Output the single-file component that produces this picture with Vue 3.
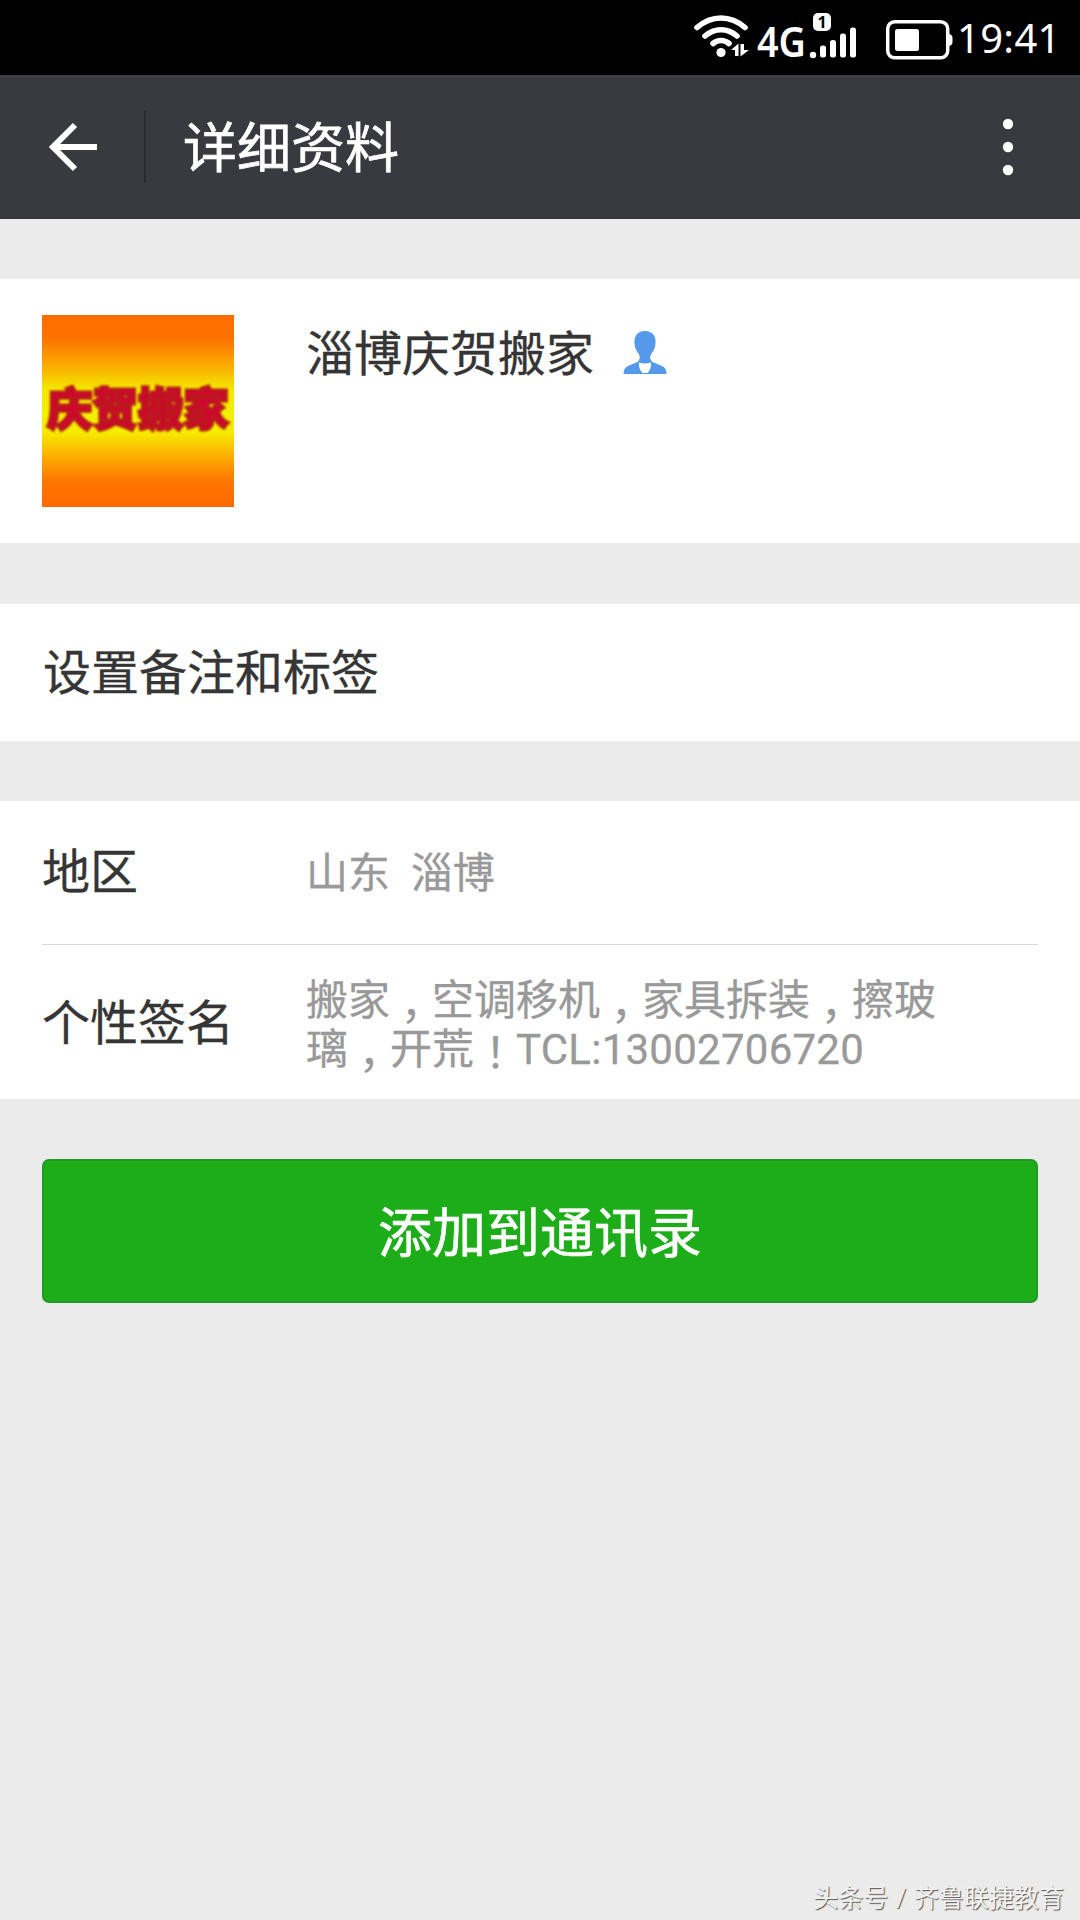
<script setup>
const name = '淄博庆贺搬家'
const region = '山东  淄博'
const signature = [
  ['搬家', '，', '空调移机', '，', '家具拆装', '，', '擦玻'],
  ['璃', '，', '开荒', '！', 'TCL:13002706720'],
]
const kind = (part) =>
  part === '，' ? 'comma' : part === '！' ? 'bang' : part.startsWith('TCL') ? 'latin' : ''
</script>

<template>
  <div class="screen">
    <div class="status">
      <svg class="indicators" width="280" height="75" viewBox="680 0 280 75">
        <g fill="none" stroke="#fff" stroke-width="5.6" stroke-linecap="round">
          <path d="M697 27.5Q708 18 721 18T745 27.5" />
          <path d="M705 36Q712 29.700 721 29.700T737 36" />
          <path d="M713 43.500Q716.500 40.500 721 40.500T729 43.500" />
        </g>
        <circle cx="721" cy="52.500" r="4.600" fill="#fff" />
        <path d="M731 50L738.500 43.500V56H735V50ZM740.500 44H744V50H749L740.500 56.500Z" fill="#fff" />
        <text x="757" y="57" class="net" textLength="49" lengthAdjust="spacingAndGlyphs">4G</text>
        <rect x="813" y="13" width="18" height="18" rx="5" fill="#fff" />
        <text x="822" y="27.500" text-anchor="middle" class="sim">1</text>
        <g fill="#fff">
          <circle cx="813" cy="55" r="3.200" />
          <rect x="820" y="45.500" width="6" height="12" rx="2.500" />
          <rect x="830" y="40" width="6" height="17.500" rx="2.500" />
          <rect x="840" y="33.500" width="6" height="24" rx="2.500" />
          <rect x="850" y="27.500" width="6" height="30" rx="2.500" />
          <rect x="895" y="29" width="24" height="22" rx="2.500" />
          <path d="M949 34Q952.500 34.500 952.500 38V42Q952.500 45.500 949 46Z" />
        </g>
        <rect x="887.700" y="21.700" width="60" height="36" rx="7" fill="none" stroke="#fff" stroke-width="3.500" />
      </svg>
      <span class="time">19:41</span>
    </div>

    <header class="nav">
      <svg class="back" width="50" height="52" viewBox="0 0 50 52">
        <path d="M27 4L5 26L27 48M6 26H49" fill="none" stroke="#fff" stroke-width="6" />
      </svg>
      <i class="sep"></i>
      <h1>详细资料</h1>
      <svg class="more" width="12" height="58" viewBox="0 0 12 58">
        <circle cx="6" cy="6" r="5.200" /><circle cx="6" cy="29" r="5.200" /><circle cx="6" cy="52" r="5.200" />
      </svg>
    </header>

    <section class="card profile">
      <div class="avatar"><span>庆贺搬家</span></div>
      <div class="name">
        <span>{{ name }}</span>
        <svg width="44" height="44" viewBox="0 0 44 44">
          <path d="M22 0C29.500 0 33 5 32.500 12C32.300 17 30.500 20 28.500 22.500C26.500 25.500 27 29 29.500 31L39 35Q43.500 37 43.500 43H.5Q.5 37 5 35L14.500 31C17 29 17.500 25.500 15.500 22.500C13.500 20 11.700 17 11.500 12C11 5 14.500 0 22 0Z" fill="#5499ea" />
          <path d="M16 31.500Q18.500 32.500 22 32.500T28 31.500Q28.500 38 24.500 42H19.500Q15.500 38 16 31.500Z" fill="#fff" />
        </svg>
      </div>
    </section>

    <section class="card remark">设置备注和标签</section>

    <section class="card details">
      <div class="row area">
        <span class="label">地区</span>
        <span class="value">{{ region }}</span>
      </div>
      <div class="row sign">
        <span class="label">个性签名</span>
        <div class="value">
          <div v-for="(line, i) in signature" :key="i" class="line">
            <span v-for="(part, j) in line" :key="j" :class="kind(part)">{{ part }}</span>
          </div>
        </div>
      </div>
    </section>

    <button class="add">添加到通讯录</button>

    <footer class="credit">头条号 / 齐鲁联捷教育</footer>
  </div>
</template>

<style>
body {
  margin: 0;
  background: #ebebeb;
}
</style>

<style scoped>
.screen {
  width: 1080px;
  height: 1920px;
  display: flex;
  flex-direction: column;
  background: #ebebeb;
  color: #353535;
  font-family: Roboto, "Noto Sans CJK SC", sans-serif;
  -webkit-text-stroke: 0.3px currentColor;
  overflow: hidden;
}
.status {
  height: 75px;
  flex: none;
  display: flex;
  background: #000;
  color: #fff;
  padding-left: 680px;
  -webkit-text-stroke: 0;
}
.indicators {
  flex: none;
}
.net {
  font: 600 42px "Noto Sans", sans-serif;
  fill: #fff;
}
.sim {
  font: bold 16px "Noto Sans", sans-serif;
  fill: #000;
}
.time {
  font: 40px/75px "Noto Sans", sans-serif;
  letter-spacing: 0.3px;
  margin-left: -3px;
  white-space: nowrap;
}
.nav {
  height: 144px;
  flex: none;
  display: flex;
  align-items: center;
  box-sizing: border-box;
  background: #393a3f;
  border-top: 3px solid #3f4045;
  border-bottom: 2px solid #36373b;
  padding: 0 66px 2px 48px;
  color: #fff;
}
.sep {
  width: 2px;
  height: 72px;
  margin: 0 37px 0 46px;
  background: #2b2c30;
}
h1 {
  margin: 0;
  padding-top: 6px;
  font-size: 54px;
  font-weight: 400;
  line-height: 80px;
  -webkit-text-stroke: 0.7px currentColor;
}
.more {
  margin-left: auto;
  fill: #fff;
}
.card {
  flex: none;
  box-sizing: border-box;
  background: #fff;
}
.profile {
  height: 264px;
  margin-top: 60px;
  padding: 36px 42px;
  display: flex;
}
.avatar {
  width: 192px;
  height: 192px;
  display: flex;
  justify-content: center;
  overflow: hidden;
  background: linear-gradient(#ff6c00 0, #fb7200 12%, #fc9200 20%, #f9b800 29%, #f5e500 38%, #f2f000 50%, #f6ec00 61%, #fbc300 69%, #fe9a00 78%, #ff7500 87%, #ff6900 100%);
}
.avatar span {
  font: 900 45.5px/182px "Noto Sans CJK SC", sans-serif;
  color: #d2052f;
  -webkit-text-stroke: 3px #b81a1c;
  filter: blur(1.2px);
  white-space: nowrap;
}
.name {
  height: 80px;
  margin-left: 72px;
  display: flex;
  align-items: center;
  gap: 29px;
  font-size: 48px;
  line-height: 76px;
}
.name svg {
  margin-top: -4px;
}
.remark {
  height: 137px;
  margin-top: 61px;
  padding-left: 43px;
  font-size: 48px;
  line-height: 139px;
}
.details {
  height: 298px;
  margin-top: 60px;
  padding: 0 42px;
}
.row {
  display: flex;
  align-items: center;
}
.area {
  height: 144px;
  box-sizing: border-box;
  border-bottom: 1px solid #d8d8d8;
}
.area .value {
  padding-bottom: 6px;
}
.sign {
  height: 154px;
  box-sizing: border-box;
  padding-top: 3px;
}
.sign .value {
  padding-top: 2px;
}
.label {
  width: 264px;
  flex: none;
  font-size: 48px;
  line-height: 70px;
}
.value {
  font-size: 42px;
  color: #999;
  white-space: pre;
}
.line {
  height: 49px;
  line-height: 49px;
  display: flex;
}
.comma,
.bang {
  width: 42px;
  box-sizing: border-box;
  font-family: "Noto Sans CJK SC", sans-serif;
  font-feature-settings: "halt";
}
.comma {
  padding-left: 11px;
}
.bang {
  padding-left: 11px;
}
.latin {
  letter-spacing: 0.25px;
}
.add {
  height: 144px;
  flex: none;
  margin: 60px 42px 0;
  padding: 8px 0 0;
  border: 2px solid #1f9a25;
  border-radius: 7px;
  background: #1cad19;
  color: #fff;
  font: 54px/132px Roboto, "Noto Sans CJK SC", sans-serif;
  -webkit-text-stroke: 0.6px currentColor;
}
.credit {
  margin: auto 16px 3px 0;
  text-align: right;
  font-size: 25px;
  line-height: 36px;
  word-spacing: 1.5px;
  color: #f2f2f2;
  text-shadow: 1px 1px 1px #555;
  -webkit-text-stroke: 0;
}
</style>
